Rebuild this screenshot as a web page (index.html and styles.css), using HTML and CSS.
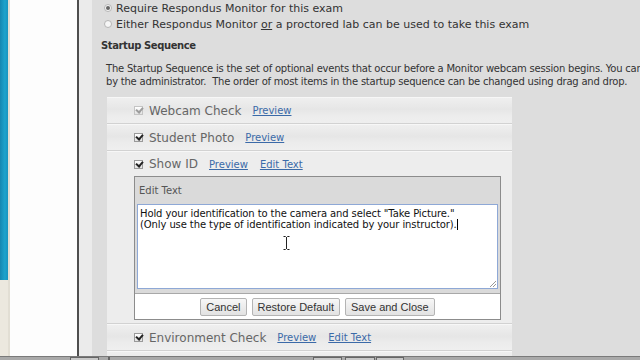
FILE: index.html
```html
<!DOCTYPE html>
<html lang="en">
<head>
    <meta charset="UTF-8">
    <title>Respondus Monitor Settings</title>
    <link rel="stylesheet" href="styles.css">
</head>
<body>
    <div class="screen">
        <div class="edge"><div class="edge-blue"></div></div>
        <div class="side"></div>
        <div class="gutter"></div>
        <div class="main">
            <div class="options">
                <div class="option"><span class="radio checked"></span><span>Require Respondus Monitor for this exam</span></div>
                <div class="option"><span class="radio"></span><span>Either Respondus Monitor <u>or</u> a proctored lab can be used to take this exam</span></div>
            </div>

            <h2 class="heading">Startup Sequence</h2>
            <p class="intro">The Startup Sequence is the set of optional events that occur before a Monitor webcam session begins. You can<br>by the administrator.&nbsp; The order of most items in the startup sequence can be changed using drag and drop.</p>

            <div class="sequence">
                <div class="step">
                    <div class="step-head">
                        <span class="check disabled"></span>
                        <span class="step-name">Webcam Check</span>
                        <a class="link" href="#">Preview</a>
                    </div>
                </div>
                <div class="step">
                    <div class="step-head">
                        <span class="check"></span>
                        <span class="step-name">Student Photo</span>
                        <a class="link" href="#">Preview</a>
                    </div>
                </div>
                <div class="step open">
                    <div class="step-head">
                        <span class="check"></span>
                        <span class="step-name">Show ID</span>
                        <a class="link" href="#">Preview</a>
                        <a class="link" href="#">Edit Text</a>
                    </div>
                    <div class="editor">
                        <div class="editor-title">Edit Text</div>
                        <div class="editor-box">Hold your identification to the camera and select "Take Picture."<br>(Only use the type of identification indicated by your instructor).<span class="caret"></span><span class="grip"></span></div>
                        <div class="editor-actions">
                            <button class="btn">Cancel</button>
                            <button class="btn">Restore Default</button>
                            <button class="btn">Save and Close</button>
                        </div>
                    </div>
                </div>
                <div class="step">
                    <div class="step-head">
                        <span class="check"></span>
                        <span class="step-name">Environment Check</span>
                        <a class="link" href="#">Preview</a>
                        <a class="link" href="#">Edit Text</a>
                    </div>
                </div>
                <div class="step">
                    <div class="step-head">
                        <span class="check"></span>
                    </div>
                </div>
            </div>
        </div>
        <svg class="ibeam" width="7" height="14" viewBox="0 0 7 14">
            <path d="M0.5 0.5h2.2M4.3 0.5h2.2M3.5 1v12M0.5 13.5h2.2M4.3 13.5h2.2" stroke="#222" stroke-width="1" fill="none"/>
        </svg>
    </div>
    <div class="taskbar">
        <span class="task t1"></span>
        <span class="task t2"></span>
        <span class="task t3"></span>
        <span class="task t4"></span>
        <span class="task t5"></span>
    </div>
</body>
</html>
```

FILE: styles.css
```css
html, body {
    margin: 0;
    padding: 0;
}
body {
    width: 640px;
    height: 360px;
    overflow: hidden;
    background: #dddddd;
    font-family: "DejaVu Sans", Verdana, sans-serif;
    color: #333;
}
.screen {
    position: relative;
    display: flex;
    height: 356px;
    overflow: hidden;
}
.edge {
    width: 8px;
    border-right: 2px solid #e2ded4;
    background: #ece8df;
    flex: none;
}
.edge-blue {
    height: 280px;
    background: linear-gradient(90deg, #1787b0, #1ea3cc 60%, #1a95bf);
}
.side {
    width: 67px;
    background: #fdfdfd;
    flex: none;
}
.gutter {
    width: 13px;
    border-left: 2px solid #4e4e4e;
    background: #ebebeb;
    flex: none;
}
.main {
    flex: 1;
    min-width: 0;
    background: #dddddd;
}

/* radio options */
.options {
    margin: 0 0 0 12px;
    font-size: 11px;
    color: #333;
}
.option {
    display: flex;
    align-items: center;
    height: 16px;
    white-space: nowrap;
}
.radio {
    width: 8px;
    height: 8px;
    border-radius: 50%;
    border: 1px solid #b5b5b5;
    background: #f6f6f6;
    margin-right: 4px;
    box-sizing: border-box;
    display: flex;
    align-items: center;
    justify-content: center;
    flex: none;
}
.radio.checked::after {
    content: "";
    width: 4px;
    height: 4px;
    border-radius: 50%;
    background: #666;
}

.heading {
    margin: 7px 0 0 9px;
    font-size: 10px;
    line-height: 14px;
    letter-spacing: -0.4px;
    color: #333;
}
.intro {
    margin: 9px 0 0 14px;
    font-size: 10px;
    line-height: 13px;
    letter-spacing: -0.22px;
    white-space: nowrap;
    color: #333;
}

/* startup sequence list */
.sequence {
    margin: 9px 0 0 15px;
    width: 405px;
    background: #ececec;
}
.step {
    border-top: 1px solid #f7f7f7;
    border-bottom: 1px solid #d2d2d2;
    background: linear-gradient(#efefef, #e6e6e6 45%, #ececec 70%, #efefef);
}
.step.open {
    background: #ededed;
    padding-bottom: 3px;
}
.step-head {
    display: flex;
    align-items: center;
    height: 25px;
    padding-left: 27px;
    white-space: nowrap;
}
.step.open .step-head {
    height: 24px;
}
.check {
    width: 9px;
    height: 9px;
    border: 1px solid #9a9a9a;
    background: linear-gradient(#ffffff, #e2e2e2);
    box-sizing: border-box;
    margin-right: 6px;
    position: relative;
    flex: none;
}
.check::after {
    content: "";
    position: absolute;
    left: 2px;
    top: -1px;
    width: 3px;
    height: 5px;
    border: solid #222;
    border-width: 0 2px 2px 0;
    transform: rotate(40deg);
}
.check.disabled {
    border-color: #c4c4c4;
}
.check.disabled::after {
    border-color: #9c9c9c;
}
.step-name {
    font-size: 12px;
    color: #666;
    margin-right: 11px;
}
.link {
    font-size: 10px;
    color: #3b6aa8;
    text-decoration: underline;
    margin-right: 12px;
}

/* edit text panel */
.editor {
    margin-left: 27px;
    width: 367px;
    border: 1px solid #8c8c8c;
    background: #dadada;
    box-sizing: border-box;
}
.editor-title {
    height: 27px;
    line-height: 27px;
    padding-left: 4px;
    font-size: 10px;
    color: #555;
}
.editor-box {
    position: relative;
    margin: 0 2px;
    height: 85px;
    box-sizing: border-box;
    border: 1px solid #8ea8d6;
    background: #fff;
    padding: 3px 2px;
    font-size: 10px;
    line-height: 11px;
    letter-spacing: -0.1px;
    color: #111;
    white-space: nowrap;
}
.caret {
    display: inline-block;
    width: 1px;
    height: 11px;
    background: #000;
    vertical-align: top;
}
.grip {
    position: absolute;
    right: 1px;
    bottom: 1px;
    width: 6px;
    height: 6px;
    background: linear-gradient(135deg, transparent 45%, #999 46%, #999 54%, transparent 55%, transparent 70%, #999 71%, #999 79%, transparent 80%);
}
.editor-actions {
    margin-top: 4px;
    border-top: 1px solid #a8a8a8;
    background: #fff;
    height: 25px;
    display: flex;
    justify-content: center;
    align-items: center;
    gap: 5px;
}
.btn {
    font-family: "Liberation Sans", Arial, sans-serif;
    font-size: 11px;
    color: #333;
    height: 18px;
    padding: 0 5px;
    border: 1px solid #b4b4b4;
    border-radius: 2px;
    background: linear-gradient(#f7f7f7, #e2e2e2);
}

.ibeam {
    position: absolute;
    left: 283px;
    top: 236px;
}

/* bottom bar */
.taskbar {
    position: relative;
    height: 4px;
    border-top: 1px solid #7a7a7a;
    background: #a9a9a9;
    box-sizing: border-box;
}
.task {
    position: absolute;
    top: 0;
    height: 3px;
    border: 1px solid #666;
    border-bottom: none;
    background: #c8c8c8;
    box-sizing: border-box;
}
.t1 { left: 70px; width: 29px; }
.t2 { left: 313px; width: 29px; }
.t3 { left: 345px; width: 30px; }
.t4 { left: 376px; width: 28px; }
.t5 { left: 108px; width: 2px; }
```
